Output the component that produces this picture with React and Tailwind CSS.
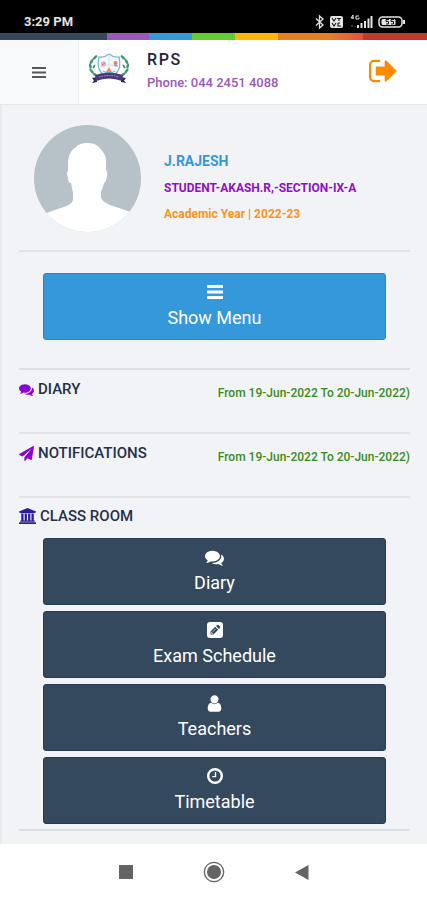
const COMMENTS =
  "M1408 768q0 139-94 257t-256.5 186.5-353.5 68.5q-86 0-176-16-124 88-278 128-36 9-86 16h-3q-11 0-20.5-8t-11.5-21q-1-3-1-6.5t.5-6.5 2-6l2.5-5 3.5-5.5 4-5 4.5-5 4-4.5q5-6 23-25t26-29.5 22.5-29 25-38.5 20.5-44q-124-72-195-177t-71-224q0-139 94-257t256.5-186.5 353.5-68.5 353.5 68.5 256.5 186.5 94 257zm384 256q0 120-71 224.5t-195 176.5q10 24 20.5 44t25 38.5 22.5 29 26 29.5 23 25q1 1 4 4.5t4.5 5 4 5 3.5 5.5l2.5 5 2 6 .5 6.5-1 6.5q-3 14-13 22t-22 7q-50-7-86-16-154-40-278-128-90 16-176 16-271 0-472-132 58 4 88 4 161 0 309-45t264-129q125-92 192-212t67-254q0-77-23-152 129 71 204 178t75 230z";
const PLANE =
  "M1764 11q33 24 27 64l-256 1536q-5 29-32 45-14 8-31 8-11 0-24-5l-453-185-242 295q-18 23-49 23-13 0-22-4-19-7-30.5-23.5t-11.5-36.5v-349l864-1059-1069 925-395-162q-37-14-40-55-2-40 32-59l1664-960q15-9 32-9 20 0 36 11z";
const UNIVERSITY =
  "M960 0l960 384v128h-128q0 26-20.5 45t-48.5 19h-1526q-28 0-48.5-19t-20.5-45h-128v-128zM256 640h256v768h128v-768h256v768h128v-768h256v768h128v-768h256v768h59q28 0 48.5 19t20.5 45v64h-1664v-64q0-26 20.5-45t48.5-19h59zM1851 1600q28 0 48.5 19t20.5 45v128h-1920v-128q0-26 20.5-45t48.5-19z";
const SIGN_OUT =
  "M704 1440q0 4 1 20t.5 26.5-3 23.5-10 19.5-20.5 6.5h-320q-119 0-203.5-84.5t-84.5-203.5v-704q0-119 84.5-203.5t203.5-84.5h320q13 0 22.5 9.5t9.5 22.5q0 4 1 20t.5 26.5-3 23.5-10 19.5-20.5 6.5h-320q-66 0-113 47t-47 113v704q0 66 47 113t113 47h312l11.5 1 11.5 3 8 5.5 7 9 2 13.5zm928-544q0 26-19 45l-544 544q-19 19-45 19t-45-19-19-45v-288h-448q-26 0-45-19t-19-45v-384q0-26 19-45t45-19h448v-288q0-26 19-45t45-19 45 19l544 544q19 19 19 45z";
const USER =
  "M1536 1399q0 109-62.5 187t-150.5 78h-854q-88 0-150.5-78t-62.5-187q0-85 8.5-160.5t31.5-152 58.5-131 94-89 134.5-34.5q131 128 313 128t313-128q76 0 134.5 34.5t94 89 58.5 131 31.5 152 8.5 160.5zm-256-887q0 159-112.5 271.5t-271.5 112.5-271.5-112.5-112.5-271.5 112.5-271.5 271.5-112.5 271.5 112.5 112.5 271.5z";

function Icon({ d, className, viewBox = "0 0 1792 1792" }) {
  return (
    <svg viewBox={viewBox} className={className} fill="currentColor" aria-hidden="true">
      <path d={d} />
    </svg>
  );
}

function BarsIcon({ className }) {
  return (
    <svg viewBox="0 0 16 16" className={className} fill="currentColor" aria-hidden="true">
      <rect x="0" y="1" width="16" height="3" rx="0.5" />
      <rect x="0" y="6.500" width="16" height="3" rx="0.5" />
      <rect x="0" y="12" width="16" height="3" rx="0.5" />
    </svg>
  );
}

function ToggleIcon() {
  return (
    <svg viewBox="0 0 14 13" className="h-[13px] w-[14px]" fill="currentColor" aria-hidden="true">
      <rect y="1" width="14" height="2" />
      <rect y="5.500" width="14" height="2" />
      <rect y="10" width="14" height="2" />
    </svg>
  );
}

function PencilSquareIcon({ className }) {
  return (
    <svg viewBox="0 0 16 16" className={className} aria-hidden="true">
      <rect width="16" height="16" rx="3" fill="currentColor" />
      <path d="M3.500 12.500v-3l4.700-4.700 3 3-4.700 4.700zM9 4l1-1q.7-.6 1.400 0l1.600 1.600q.6.700 0 1.400l-1 1z" fill="#34495e" />
      <path d="M5 10.500l3.800-3.800M4.500 10v1.500H6" stroke="currentColor" strokeWidth=".6" fill="none" />
    </svg>
  );
}

function ClockIcon({ className }) {
  return (
    <svg viewBox="0 0 16 16" className={className} fill="none" stroke="currentColor" aria-hidden="true">
      <circle cx="8" cy="8" r="6.800" strokeWidth="2.400" />
      <path d="M8.500 4v4.600H5.300" strokeWidth="1.400" />
    </svg>
  );
}

function StatusBar() {
  return (
    <div className="flex h-[33px] items-end justify-between bg-black pr-5 pb-[3px] pl-6 text-[#e4e4e4]">
      <span className="text-[13px] leading-4 font-bold">3:29 PM</span>
      <svg viewBox="0 0 94 16" className="h-4 w-[94px]" fill="none" stroke="currentColor" aria-label="Phone status">
        <path d="M3 4.500l7 6.500-3.500 3V2L10 5l-7 6.500" strokeWidth="1.300" />
        <rect x="17" y="2" width="13" height="12" rx="2" fill="currentColor" stroke="none" />
        <path d="M19 4l2 3 2-3M24 4.500h4M26 4.500V7M19 9l2 3 2-3M25 9v3h3M25 9h2" stroke="#111" strokeWidth="1.100" />
        <path d="M40 1v4M40 1l-2 3h3M46 2h-3v3h3V3.500" strokeWidth="1" />
        <path d="M39 13v-2M42 13v-1" strokeWidth="1" opacity=".5" />
        <path d="M45 14v-3M48.500 14V9M52 14V7M55.500 14V4.500M58.500 14V2" strokeWidth="2" />
        <rect x="66" y="3" width="23" height="10" rx="3.500" strokeWidth="1.500" />
        <rect x="68.500" y="5" width="14" height="6" rx="1.500" fill="currentColor" stroke="none" />
        <path d="M76 5.500h-3v2h2.500v2.500H73M81 5.500h-3v2h2.500v2.500H78" stroke="#111" strokeWidth="1" />
        <path d="M91 6v4" strokeWidth="2" />
      </svg>
    </div>
  );
}

function ColorStrip() {
  return (
    <div className="flex h-[7px]">
      <div className="w-[25%] bg-[#34495e]" />
      <div className="w-[10%] bg-[#9b59b6]" />
      <div className="w-[10%] bg-[#3498db]" />
      <div className="w-[10%] bg-[#62cb31]" />
      <div className="w-[10%] bg-[#ffb606]" />
      <div className="w-[12%] bg-[#e67e22]" />
      <div className="w-[8%] bg-linear-to-r from-[#e67e22] to-[#e74c3c]" />
      <div className="flex-1 bg-[#c0392b]" />
    </div>
  );
}

function SchoolCrest() {
  return (
    <svg viewBox="0 0 42 32" className="h-8 w-[42px]" fill="none" aria-label="School crest">
      <path d="M9 2C2 7 0 14 4 20c1 2 3 3 5 4M33 2c7 5 9 12 5 18-1 2-3 3-5 4" stroke="#b9dccb" strokeWidth="1" />
      <g fill="#3f9a6e">
        <ellipse cx="7" cy="4.500" rx="3" ry="1.300" transform="rotate(-40 7 4.500)" />
        <ellipse cx="3.500" cy="8.500" rx="2.800" ry="1.300" transform="rotate(-60 3.500 8.500)" />
        <ellipse cx="2.300" cy="13" rx="2.700" ry="1.300" transform="rotate(75 2.300 13)" />
        <ellipse cx="6" cy="13.500" rx="2.300" ry="1" transform="rotate(-60 6 13.500)" />
        <ellipse cx="3.500" cy="18" rx="2.800" ry="1.300" transform="rotate(50 3.500 18)" />
        <ellipse cx="7" cy="21.500" rx="2.600" ry="1.300" transform="rotate(35 7 21.500)" />
        <ellipse cx="35" cy="4.500" rx="3" ry="1.300" transform="rotate(40 35 4.500)" />
        <ellipse cx="38.500" cy="8.500" rx="2.800" ry="1.300" transform="rotate(60 38.500 8.500)" />
        <ellipse cx="39.700" cy="13" rx="2.700" ry="1.300" transform="rotate(-75 39.700 13)" />
        <ellipse cx="36" cy="13.500" rx="2.300" ry="1" transform="rotate(60 36 13.500)" />
        <ellipse cx="38.500" cy="18" rx="2.800" ry="1.300" transform="rotate(-50 38.500 18)" />
        <ellipse cx="35" cy="21.500" rx="2.600" ry="1.300" transform="rotate(-35 35 21.500)" />
      </g>
      <path d="M11 4q5 1 10-3 5 4 10 3c2 9 1 16-10 21C10 20 9 13 11 4z" fill="#f1f7fd" stroke="#79b7d8" strokeWidth="1.300" />
      <path d="M21 3v9M12 14q9-4 18 0" stroke="#cfe0f0" strokeWidth="1" />
      <circle cx="15.500" cy="11" r="2.700" fill="#efb3ae" />
      <path d="M14 12l3-2" stroke="#d96b65" strokeWidth="1" />
      <circle cx="27.500" cy="10" r="2" fill="#dc8177" />
      <path d="M26.500 12.500h3" stroke="#8b95b5" strokeWidth="1.500" />
      <path d="M21 14l3 5h-6z" fill="#f08d54" />
      <path d="M15 18q6 4 12 0" stroke="#7bbfe2" strokeWidth="1.500" />
      <path d="M4 25l5-1v5l-5 1 2-2.500zM38 25l-5-1v5l5 1-2-2.500z" fill="#34245f" />
      <path d="M7 22q14-5 28 0l-1 6q-13-5-26 0z" fill="#4b3a7c" />
      <path d="M11 24q10-3 20 0" stroke="#a79bca" strokeWidth="1" strokeDasharray="1.500 1" />
    </svg>
  );
}

function Header() {
  return (
    <header className="flex h-[65px] border-b border-[#e4e7ea] bg-white">
      <button aria-label="Toggle navigation" className="flex w-[79px] items-center justify-center border-r border-[#eceff1] bg-[#f7f9fa] text-[#55585c]">
        <ToggleIcon />
      </button>
      <div className="flex flex-1 items-start pr-[30px] pl-[9px]">
        <div className="pt-[13px]">
          <SchoolCrest />
        </div>
        <div className="flex-1 pt-[10px] pl-[17px]">
          <h1 className="text-base leading-5 font-medium tracking-widest text-[#1c2541]">RPS</h1>
          <p className="pt-1 text-[13px] leading-[18px] font-medium text-[#9b59b6]">Phone: 044 2451 4088</p>
        </div>
        <button aria-label="Sign out" className="pt-[15px] text-[#fb8c00]">
          <Icon d={SIGN_OUT} viewBox="64 160 1600 1472" className="h-8 w-7" />
        </button>
      </div>
    </header>
  );
}

function Profile() {
  return (
    <section className="flex items-center border-b-2 border-[#dfe2e6] pb-[18px] pl-[15px]">
      <svg viewBox="0 0 107 107" className="size-[107px] shrink-0" aria-label="Profile photo">
        <defs>
          <clipPath id="avatar">
            <circle cx="53.5" cy="53.5" r="53.5" />
          </clipPath>
        </defs>
        <g clipPath="url(#avatar)">
          <rect width="107" height="107" fill="#b6c2c8" />
          <path
            fill="#fff"
            d="M54 18c-6 0-9 1-12 4-6 4-8 10-8 17v7c-2 1-1 4 0 7 0 3 1 5 3 5 1 4 1 7 2 9v7c0 4-4 6-9 8-8 3-17 5-21 8v24h90V88c-7-3-15-5-23-8-6-3-9-5-9-9v-5c2-3 2-5 3-8 2-1 2-3 3-6 0-3 1-6-1-7 0-7 1-13-3-18-4-6-8-9-15-9z"
          />
        </g>
      </svg>
      <div className="pt-4 pl-[23px] font-bold">
        <h2 className="text-sm leading-7 font-bold text-[#3498db]">J.RAJESH</h2>
        <p className="text-xs leading-[26px] text-[#8e10c0]">STUDENT-AKASH.R,-SECTION-IX-A</p>
        <p className="text-xs leading-[26px] text-[#f7941d]">Academic Year | 2022-23</p>
      </div>
    </section>
  );
}

function FeedRow({ icon, title }) {
  return (
    <section className="flex h-16 items-start justify-between border-b-2 border-[#e2e4e8] pt-[9px]">
      <h3 className="flex items-center gap-1 text-[15px] leading-5 font-medium text-[#25304a]">
        <Icon d={icon} className="size-[15px] text-[#8a05d0]" />
        {title}
      </h3>
      <p className="pt-1 text-xs leading-5 font-medium text-[#3c8a22]">From 19-Jun-2022 To 20-Jun-2022)</p>
    </section>
  );
}

function MenuButton({ icon, label, className }) {
  return (
    <button className={`flex h-[67px] w-full flex-col items-center rounded-[3px] border pt-2 text-lg leading-6 text-white ${className}`}>
      <span className="flex h-5 items-center">{icon}</span>
      <span className="pt-1">{label}</span>
    </button>
  );
}

const classRoom = [
  { label: "Diary", icon: <Icon d={COMMENTS} className="size-[19px]" /> },
  { label: "Exam Schedule", icon: <PencilSquareIcon className="size-4" /> },
  { label: "Teachers", icon: <Icon d={USER} className="size-[19px]" /> },
  { label: "Timetable", icon: <ClockIcon className="size-4" /> },
];

function NavigationBar() {
  return (
    <nav className="flex h-14 items-center justify-center gap-[70px] bg-white text-[#646464]">
      <button aria-label="Recent apps" className="size-[14px] bg-[#646464]" />
      <button aria-label="Home">
        <svg viewBox="0 0 22 22" className="size-[22px]" aria-hidden="true">
          <circle cx="11" cy="11" r="9.700" fill="none" stroke="currentColor" strokeWidth="1.300" />
          <circle cx="11" cy="11" r="7" fill="currentColor" />
        </svg>
      </button>
      <button aria-label="Back">
        <svg viewBox="0 0 14 15" className="h-[15px] w-[14px]" fill="currentColor" aria-hidden="true">
          <path d="M13.500 0v15L0 7.500z" />
        </svg>
      </button>
    </nav>
  );
}

export default function App() {
  return (
    <div className="flex min-h-screen flex-col bg-[#f1f3f6] font-[Roboto,sans-serif]">
      <StatusBar />
      <ColorStrip />
      <Header />
      <main className="flex-1 border-l-2 border-[#e8eaed] pt-5 pr-[17px] pb-3 pl-[17px]">
        <Profile />
        <div className="border-b-2 border-[#dcdfe3] px-6 pt-[21px] pb-7">
          <MenuButton
            label="Show Menu"
            icon={<BarsIcon className="size-4" />}
            className="border-[#1c8ad3] bg-[#3498db]"
          />
        </div>
        <FeedRow icon={COMMENTS} title="DIARY" />
        <FeedRow icon={PLANE} title="NOTIFICATIONS" />
        <section className="border-b-2 border-[#dcdfe3] pt-2 pb-[5px]">
          <h3 className="flex items-center gap-1 text-[15px] leading-5 font-medium text-[#25304a]">
            <Icon d={UNIVERSITY} viewBox="0 0 1920 1792" className="h-4 w-[17px] text-[#2b1d9a]" />
            CLASS ROOM
          </h3>
          <div className="flex flex-col gap-[6px] px-6 pt-3">
            {classRoom.map((item) => (
              <MenuButton key={item.label} label={item.label} icon={item.icon} className="border-[#233d56] bg-[#34495e]" />
            ))}
          </div>
        </section>
      </main>
      <NavigationBar />
    </div>
  );
}
